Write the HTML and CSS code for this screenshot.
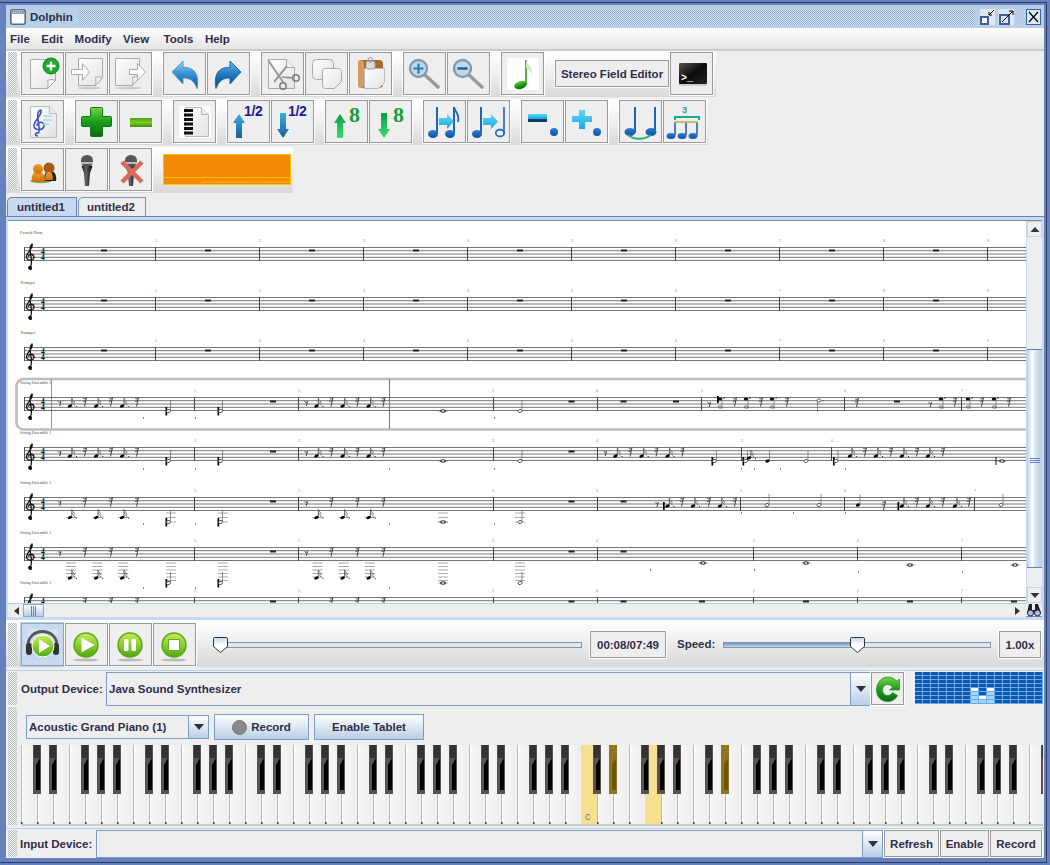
FILE: index.html
```html
<!DOCTYPE html>
<html lang="en">
<head>
<meta charset="utf-8">
<title>Dolphin</title>
<link rel="stylesheet" href="styles.css">
</head>
<body>
<svg class="defs" width="0" height="0" aria-hidden="true">
  <defs>
    <linearGradient id="gPg" x1="0" y1="0" x2="1" y2="1"><stop offset="0" stop-color="#fff"/><stop offset="1" stop-color="#e2e2e2"/></linearGradient>
    <linearGradient id="gB" x1="0" y1="0" x2="0" y2="1"><stop offset="0" stop-color="#9bd6f4"/><stop offset=".45" stop-color="#3a94d4"/><stop offset="1" stop-color="#0d4f96"/></linearGradient>
    <linearGradient id="gBd" x1="0" y1="0" x2="0" y2="1"><stop offset="0" stop-color="#6fbbe8"/><stop offset=".5" stop-color="#1f78bd"/><stop offset="1" stop-color="#0b4683"/></linearGradient>
    <linearGradient id="gG" x1="0" y1="0" x2="0" y2="1"><stop offset="0" stop-color="#7fd04a"/><stop offset=".5" stop-color="#18a018"/><stop offset="1" stop-color="#0c6a14"/></linearGradient>
    <linearGradient id="gGm" x1="0" y1="0" x2="0" y2="1"><stop offset="0" stop-color="#4f9e18"/><stop offset=".5" stop-color="#7ccc22"/><stop offset="1" stop-color="#3d8c10"/></linearGradient>
    <linearGradient id="gP" x1="0" y1="0" x2="0" y2="1"><stop offset="0" stop-color="#c4ef55"/><stop offset="1" stop-color="#4fa80e"/></linearGradient>
    <linearGradient id="gN" x1="0" y1="0" x2="0" y2="1"><stop offset="0" stop-color="#2f7fcf"/><stop offset="1" stop-color="#0f4fa6"/></linearGradient>
    <linearGradient id="gUp" x1="0" y1="0" x2="0" y2="1"><stop offset="0" stop-color="#38b0e0"/><stop offset="1" stop-color="#1a5f96"/></linearGradient>
    <linearGradient id="gGa" x1="0" y1="0" x2="0" y2="1"><stop offset="0" stop-color="#0c9a4a"/><stop offset="1" stop-color="#38e070"/></linearGradient>
    <linearGradient id="gC" x1="0" y1="0" x2="0" y2="1"><stop offset="0" stop-color="#5fd8fa"/><stop offset="1" stop-color="#18a8e0"/></linearGradient>
    <linearGradient id="gT" x1="0" y1="0" x2="1" y2="1"><stop offset="0" stop-color="#555"/><stop offset=".5" stop-color="#0c0c0c"/><stop offset="1" stop-color="#222"/></linearGradient>
    <linearGradient id="gO" x1="0" y1="0" x2="0" y2="1"><stop offset="0" stop-color="#f0a030"/><stop offset="1" stop-color="#c87010"/></linearGradient>
    <linearGradient id="gM" x1="0" y1="0" x2="1" y2="0"><stop offset="0" stop-color="#111"/><stop offset=".4" stop-color="#666"/><stop offset="1" stop-color="#000"/></linearGradient>
    <linearGradient id="gTh" x1="0" y1="0" x2="0" y2="1"><stop offset="0" stop-color="#c4d6ec"/><stop offset=".5" stop-color="#fff"/></linearGradient>
    <g id="ball"><ellipse cx="20" cy="36" rx="13" ry="1.500" fill="#bbb"/><circle cx="20" cy="21" r="12" fill="url(#gP)" stroke="#5aa818" stroke-width="1.500"/></g>
    <g id="mic"><rect x="15" y="6" width="12" height="12" rx="5.500" fill="#555"/><rect x="15" y="13" width="12" height="2" fill="#bbb"/><path d="M15.500 17h11l-2.500 7-1 13h-4l-1-13z" fill="url(#gM)"/></g>
  </defs>
</svg>

<div class="win">
  <header class="title">
    <svg class="win-ic" width="16" height="16" viewBox="0 0 16 16"><rect x=".8" y=".8" width="14.400" height="14.400" rx="2" fill="#fff" stroke="#596a84" stroke-width="1.600"/><rect x="2" y="2" width="12" height="3" fill="#8b9bb3"/><path d="M3 3.500h10" stroke="#dde" stroke-dasharray="1 1"/></svg>
    <span class="title-txt">Dolphin</span>
    <div class="bumps"></div>
    <svg class="win-btn" width="15" height="16" viewBox="0 0 15 16"><rect width="15" height="16" fill="#dde8f5"/><rect x="1" y="8" width="7" height="7" fill="#fff" stroke="#3f5f9a" stroke-width="2"/><path d="M14 1L9 6M9 3v3h3" stroke="#000" fill="none"/></svg>
    <svg class="win-btn m3" width="16" height="16" viewBox="0 0 16 16"><rect width="16" height="16" fill="#dde8f5"/><rect x="2" y="6" width="9" height="9" fill="#d8e4f4" stroke="#3f5f9a" stroke-width="2"/><path d="M4 13L15 2M11 2h4v4" stroke="#000" fill="none"/></svg>
    <svg class="win-btn m12" width="15" height="16" viewBox="0 0 15 16"><rect width="15" height="16" fill="#dde8f5" stroke="#3f5f9a" stroke-width="2"/><path d="M3 3l9 10M12 3L3 13" stroke="#000" stroke-width="1.200"/></svg>
  </header>

  <nav class="menu"><span>File</span><span>Edit</span><span>Modify</span><span>View</span><span class="mw">Tools</span><span>Help</span></nav>

  <div class="tools">
  <div class="tb r1">
    <i class="grip"></i>
    <button class="ib"><svg viewBox="0 0 41 41"><path d="M8.500 6.500h25v21l-8 8h-17z" fill="url(#gPg)" stroke="#aaa"/><path d="M33.500 27.500c-3-1.500-6-1-8 0 1 3 .5 5.500 0 8z" fill="#f2f2f2" stroke="#aaa"/><circle cx="29" cy="13" r="8" fill="#1fa82a" stroke="#0b8c1c"/><path d="M29 8.500v9M24.500 13h9" stroke="#fff" stroke-width="2.400"/></svg></button>
    <button class="ib"><svg viewBox="0 0 41 41"><ellipse cx="23" cy="35" rx="12" ry="1.500" fill="#ccc"/><path d="M12.500 5.500h24v19l-7 8h-17z" fill="url(#gPg)" stroke="#aaa"/><path d="M36.500 24.500c-3-1-5-1-7 0 .5 3 .5 5 0 8z" fill="#f2f2f2" stroke="#aaa"/><path d="M5.500 16.500h11v-6l7 8.500-7 8.500v-6h-11z" fill="#fff" stroke="#aaa"/></svg></button>
    <button class="ib"><svg viewBox="0 0 41 41"><ellipse cx="19" cy="35" rx="13" ry="1.500" fill="#ccc"/><path d="M5.500 5.500h24v19l-7 8h-17z" fill="url(#gPg)" stroke="#aaa"/><path d="M29.500 24.500c-3-1-5-1-7 0 .5 3 .5 5 0 8z" fill="#f2f2f2" stroke="#aaa"/><path d="M19.500 16.500h8v-6l8 8.500-8 8.500v-6h-8z" fill="#fff" stroke="#aaa"/></svg></button>
    <i class="sep"></i>
    <button class="ib"><svg viewBox="0 0 41 41"><path d="M8 19L19 8v6.500c10-1 17 6 14 21-3-8-7-10.500-14-10.500v6z" fill="url(#gB)" stroke="#4a98d4"/></svg></button>
    <button class="ib"><svg viewBox="0 0 41 41"><path d="M33 19L22 8v6.500C12 13.500 5 20.500 8 35.500c3-8 7-10.500 14-10.500v6z" fill="url(#gBd)" stroke="#1a6aaa"/></svg></button>
    <i class="sep"></i>
    <button class="ib"><svg viewBox="0 0 41 41"><path d="M6.500 6.500h18l8 8v21h-26z" fill="url(#gPg)" stroke="#aaa"/><path d="M24.500 6.500v8h8" fill="#eee" stroke="#aaa"/><path d="M6 7l15 22M25 13L12 29" stroke="#999" stroke-width="2" fill="none"/><circle cx="21" cy="33" r="3.200" fill="none" stroke="#777" stroke-width="1.400"/><circle cx="34" cy="25" r="3.200" fill="none" stroke="#777" stroke-width="1.400"/><path d="M20 24l11 1" stroke="#888" stroke-width="1.600"/></svg></button>
    <button class="ib"><svg viewBox="0 0 41 41"><rect x="6.500" y="6.500" width="21" height="20" rx="4" fill="url(#gPg)" stroke="#aaa"/><path d="M19.500 15.500h13c2 0 3 1 3 3v10l-7 7h-9c-2 0-3-1-3-3v-14c0-2 1-3 3-3z" fill="url(#gPg)" stroke="#aaa"/></svg></button>
    <button class="ib"><svg viewBox="0 0 41 41"><rect x="8" y="7" width="25" height="28" rx="4" fill="#a9672c"/><rect x="8" y="7" width="6" height="28" rx="3" fill="#d39a62"/><path d="M14.500 15.500h20v14l-6 6h-14z" fill="url(#gPg)" stroke="#bbb"/><rect x="16" y="8" width="9" height="8" rx="2" fill="#ddd" stroke="#999"/><circle cx="20.500" cy="7" r="2.400" fill="none" stroke="#999"/></svg></button>
    <i class="sep"></i>
    <button class="ib"><svg viewBox="0 0 41 41"><path d="M21 22l14 13" stroke="#999" stroke-width="3.400"/><circle cx="14.500" cy="15.500" r="8.500" fill="#bcd8ec" stroke="#8499ad" stroke-width="2.400"/><path d="M14.500 10.500v10M9.500 15.500h10" stroke="#2b7ab8" stroke-width="2.200"/></svg></button>
    <button class="ib"><svg viewBox="0 0 41 41"><path d="M21 22l14 13" stroke="#999" stroke-width="3.400"/><circle cx="14.500" cy="15.500" r="8.500" fill="#bcd8ec" stroke="#8499ad" stroke-width="2.400"/><path d="M9.500 15.500h10" stroke="#1f5f96" stroke-width="2.400"/></svg></button>
    <i class="sep"></i>
    <button class="ib"><svg viewBox="0 0 41 41"><rect x="5" y="5" width="32" height="32" fill="#fff"/><path d="M24 7v24" stroke="#2c9a1c" stroke-width="1.600"/><path d="M24 7c1 5 7 7 6 15-1-4-3-5-6-7z" fill="#c8e8c0"/><ellipse cx="18.500" cy="32" rx="6.500" ry="4" fill="url(#gG)" transform="rotate(-18 18.500 32)"/></svg></button>
    <i class="sep"></i>
    <button class="tx stereo">Stereo Field Editor</button>
    <button class="ib"><svg viewBox="0 0 41 41"><rect x="8" y="10" width="28" height="21" rx="1" fill="url(#gT)"/><rect x="8" y="31" width="28" height="2" fill="#ccc"/><text x="10" y="28" class="term">&gt;_</text></svg></button>
  </div>

  <div class="tb r2">
    <i class="grip"></i>
    <button class="ib"><svg viewBox="0 0 41 41"><path d="M8.500 5.500h19l7 7v24h-26z" fill="url(#gPg)" stroke="#bbb"/><path d="M27.500 5.500v7h7" fill="#eee" stroke="#bbb"/><path d="M16 35c-4 0-3-4 0-3 2 1 1-9 0-14-1-4 0-9 3-9 1 6-6 9-7 15-1 6 9 6 10 1 0-5-7-5-7 0" fill="none" stroke="#3a50b8" stroke-width="1.500"/><path d="M21 15h9M21 19h9M21 23h6" stroke="#a8d8f4" stroke-width="1.400"/></svg></button>
    <i class="sep"></i>
    <button class="ib"><svg viewBox="0 0 41 41"><path d="M15.500 6.500h10c.5 0 1 .5 1 1v8h8c.5 0 1 .5 1 1v8c0 .5-.5 1-1 1h-8v9c0 .5-.5 1-1 1h-10c-.5 0-1-.5-1-1v-9h-8c-.5 0-1-.5-1-1v-8c0-.5.5-1 1-1h8v-8c0-.5.5-1 1-1z" fill="url(#gG)" stroke="#0b7a16"/></svg></button>
    <button class="ib"><svg viewBox="0 0 41 41"><rect x="10" y="17" width="22" height="9" fill="url(#gGm)"/></svg></button>
    <i class="sep"></i>
    <button class="ib"><svg viewBox="0 0 41 41"><rect x="5" y="5" width="32" height="32" fill="#fff"/><path d="M11.500 6.500h16l7 7v22h-23z" fill="url(#gPg)" stroke="#bbb"/><path d="M27.500 6.500v7h7" fill="#eee" stroke="#bbb"/><path d="M10 9.500h9M10 14h9M10 18.500h9M10 23h9M10 27.500h9M10 32h9" stroke="#111" stroke-width="2.800"/></svg></button>
    <i class="sep"></i>
    <button class="ib"><svg viewBox="0 0 41 41"><path d="M11 13l6 9h-3v15H8V22H5z" fill="url(#gUp)"/><text x="16" y="15" class="half">1/2</text></svg></button>
    <button class="ib"><svg viewBox="0 0 41 41"><path d="M11 37l6-9h-3V12H8v16H5z" fill="url(#gUp)"/><text x="16" y="15" class="half">1/2</text></svg></button>
    <i class="sep"></i>
    <button class="ib"><svg viewBox="0 0 41 41"><path d="M14 13l6 9h-3v15h-6V22H8z" fill="url(#gGa)"/><text x="23" y="21" class="eight">8</text></svg></button>
    <button class="ib"><svg viewBox="0 0 41 41"><path d="M14 37l6-9h-3V12h-6v16H8z" fill="url(#gGa)"/><text x="23" y="21" class="eight">8</text></svg></button>
    <i class="sep"></i>
    <button class="ib"><svg viewBox="0 0 41 41"><path d="M13 6v27M30 6v27" stroke="#1c66b8" stroke-width="2"/><path d="M30 6c1 5 6 7 4 15" fill="none" stroke="#1c66b8" stroke-width="1.800"/><ellipse cx="9" cy="33" rx="5" ry="4" fill="url(#gN)"/><ellipse cx="26" cy="33" rx="5" ry="4" fill="url(#gN)"/><path d="M15 17h8v-4l7 7.500-7 7.500v-4h-8z" fill="url(#gC)"/></svg></button>
    <button class="ib"><svg viewBox="0 0 41 41"><path d="M13 6v27" stroke="#1c66b8" stroke-width="2"/><path d="M36 6v27" stroke="#1c66b8" stroke-width="1.600"/><ellipse cx="9" cy="33" rx="5" ry="4" fill="url(#gN)"/><ellipse cx="32" cy="32" rx="4.200" ry="3.400" fill="none" stroke="#1c66b8" stroke-width="1.600"/><path d="M15 17h8v-4l7 7.500-7 7.500v-4h-8z" fill="url(#gC)"/></svg></button>
    <i class="sep"></i>
    <button class="ib"><svg viewBox="0 0 41 41"><rect x="6" y="13" width="19" height="5" fill="url(#gC)"/><rect x="6" y="18" width="19" height="3" fill="#103c66"/><circle cx="32" cy="31" r="4" fill="url(#gN)"/></svg></button>
    <button class="ib"><svg viewBox="0 0 41 41"><path d="M13 9h6v6h7v6h-7v7h-6v-7H6v-6h7z" fill="url(#gC)"/><circle cx="31" cy="31" r="4" fill="url(#gN)"/></svg></button>
    <i class="sep"></i>
    <button class="ib"><svg viewBox="0 0 41 41"><path d="M15 6v26M35 6v26" stroke="#1c66b8" stroke-width="2"/><ellipse cx="10" cy="31" rx="5.500" ry="4" fill="url(#gN)"/><ellipse cx="31" cy="31" rx="5.500" ry="4" fill="url(#gN)"/><path d="M8 34c6 5 16 5 23 0" fill="none" stroke="#2ab090" stroke-width="2"/></svg></button>
    <button class="ib"><svg viewBox="0 0 41 41"><text x="18" y="12" class="tri">3</text><path d="M11 19v-3h24v3" fill="none" stroke="#20a888" stroke-width="2"/><path d="M11 21v13M22 21v13M33 21v13" stroke="#1c66b8" stroke-width="1.600"/><path d="M11 20h22v2H11z" fill="#c8b868"/><ellipse cx="7" cy="35" rx="4.500" ry="3" fill="url(#gN)"/><ellipse cx="18" cy="35" rx="4.500" ry="3" fill="url(#gN)"/><ellipse cx="29" cy="35" rx="4.500" ry="3" fill="url(#gN)"/></svg></button>
  </div>

  <div class="tb r3">
    <i class="grip"></i>
    <button class="ib"><svg viewBox="0 0 41 41"><ellipse cx="19" cy="32" rx="11" ry="2.200" fill="#6ab04a"/><path d="M22 32c0-6 1-9 4-10h4c3 1 5 5 4 10z" fill="#222"/><circle cx="27" cy="19" r="5.500" fill="#a85a14"/><path d="M10 33c-1-6 1-10 4-10h4c3 0 5 4 5 10z" fill="url(#gO)"/><circle cx="16" cy="20" r="5" fill="url(#gO)"/><path d="M23 31c0-5 1-7 3-8h2c2 1 3 3 3 8z" fill="url(#gO)"/></svg></button>
    <button class="ib"><svg viewBox="0 0 41 41"><use href="#mic"/></svg></button>
    <button class="ib"><svg viewBox="0 0 41 41"><use href="#mic"/><path d="M12 13l20 20M32 13L12 33" stroke="#d86a5c" stroke-width="4.500"/></svg></button>
    <i class="sep"></i>
    <svg class="mem" width="128" height="31" viewBox="0 0 128 31"><rect x=".5" y=".5" width="127" height="30" fill="#f28a05" stroke="#fbc000"/><path d="M0 23.500h128M39 29.500v-1.500h89M59 28v1M84 28v1M108 28v1" stroke="#fbc000" fill="none"/></svg>
  </div>

  <div class="tabs"><span class="tab on">untitled1</span><span class="tab">untitled2</span></div>
  </div>

  <section class="pane">
    <div class="scroll">
      <svg class="score" width="1018" height="382" viewBox="8 221 1018 382">
        <defs>
          <g id="st"><path d="M24 .5h1002M24 3.700h1002M24 7h1002M24 10.300h1002M24 13.500h1002" stroke="#666" stroke-width=".9" fill="none"/><path d="M24.500 0v14" stroke="#555"/><path d="M32 22c-3 1-4.500-2-2-2.700 2 0 1.500-8 .5-13-1-5 0-8 1.500-9.300 2 3-5 8.500-5.500 12.300-.5 5 7.500 5 7.500 1 0-4-5.500-4-5.500-.5" fill="none" stroke="#111" stroke-width="1.300"/><circle cx="30.500" cy="20.500" r="1.500" fill="#000"/><text x="41" y="6.800" class="ts">4</text><text x="41" y="13.300" class="ts">4</text></g>
          <path id="bar" d="M0 0v14" stroke="#444" stroke-width="1"/>
          <rect id="wr" x="-3" y="-1" width="6" height="2" fill="#222"/>
          <g id="r8"><path d="M-1.500-1.500c.5 1 2 1 3 0l-1.300 4.500" fill="none" stroke="#333" stroke-width=".9"/></g>
          <g id="r16"><path d="M-.5 5l2-9M-1.700-3c1 .8 2.200.5 3.200-.8M-2.200-.5c1 .8 2.200.5 3.200-.8" fill="none" stroke="#333" stroke-width=".9"/></g>
          <g id="n16"><ellipse rx="2.400" ry="1.500" fill="#000" transform="rotate(-25)"/><path d="M1.800-.5v-7.500c.5 2 2.500 3 3 5M1.800-5c.5 2 2.500 2.500 3 4.500" fill="none" stroke="#555" stroke-width=".8"/><circle cx="6.500" cy=".5" r=".6" fill="#111"/></g>
          <g id="ch"><ellipse cx="0" cy="0" rx="2.300" ry="1.500" fill="#111"/><path d="M2 0v10" stroke="#666" stroke-width=".7"/><ellipse cx="0" cy="8" rx="1.800" ry="1.200" fill="none" stroke="#555" stroke-width=".7"/><circle cx="4" cy="-.8" r=".6" fill="#111"/></g>
          <g id="hn"><ellipse rx="2" ry="1.500" fill="#fff" stroke="#444" stroke-width=".9" transform="rotate(-20)"/><path d="M2-.5v-10.500" stroke="#666" stroke-width=".7"/></g>
          <g id="hb"><rect x="-3" y="-4" width="1.700" height="8.500" fill="#000"/><use href="#hn"/></g>
          <g id="qn"><ellipse rx="2.300" ry="1.500" fill="#111" transform="rotate(-20)"/><path d="M2-.5v-10" stroke="#666" stroke-width=".7"/></g>
          <g id="wn"><ellipse rx="3" ry="1.700" fill="#333"/><ellipse rx="1.200" ry="1" fill="#fff"/><path d="M-5 0h10" stroke="#777" stroke-width=".6"/></g>
          <g id="run"><use href="#r8" y="6"/><use href="#n16" x="10.500" y="9"/><use href="#r16" x="25.500" y="4.500"/><use href="#n16" x="36.700" y="9"/><use href="#r16" x="51.500" y="4.500"/><use href="#n16" x="62.700" y="9"/><use href="#r16" x="77.500" y="4.500"/></g>
          <g id="l1"><path d="M-4 0h11" stroke="#666" stroke-width=".6"/><use href="#n16"/></g>
          <g id="runL"><use href="#r8" y="6"/><use href="#l1" x="10.500" y="20.500"/><use href="#r16" x="25.500" y="4.500"/><use href="#l1" x="36.700" y="20.500"/><use href="#r16" x="51.500" y="4.500"/><use href="#l1" x="62.700" y="20.500"/><use href="#r16" x="77.500" y="4.500"/></g>
          <g id="l5"><path d="M-4-15h10M-4-11.500h10M-4-8h10M-4-4.500h10M-4-1h10" stroke="#666" stroke-width=".6"/><use href="#n16"/></g>
          <g id="runLL"><use href="#r8" y="6"/><use href="#l5" x="10.500" y="31"/><use href="#r16" x="25.500" y="4.500"/><use href="#l5" x="36.700" y="31"/><use href="#r16" x="51.500" y="4.500"/><use href="#l5" x="62.700" y="31"/><use href="#r16" x="77.500" y="4.500"/></g>
          <g id="runT"><use href="#r16" x="25.500" y="4.500"/><use href="#r16" x="51.500" y="4.500"/><use href="#r16" x="77.500" y="4.500"/></g>
          <g id="led"><path d="M-5 0h10M-5 3.500h10M-5 7h10M-5 10.500h10M-5 14h10M-5 17.500h10" stroke="#777" stroke-width=".6"/></g>
          <g id="led3"><path d="M-5 0h10M-5 4.500h10M-5 9h10" stroke="#777" stroke-width=".6"/></g>
          <g id="wr9"><use href="#wr" x="104"/><use href="#bar" x="155.500" y="-3.500"/><use href="#wr" x="208"/><use href="#bar" x="259.500" y="-3.500"/><use href="#wr" x="312"/><use href="#bar" x="363.500" y="-3.500"/><use href="#wr" x="416"/><use href="#bar" x="467.500" y="-3.500"/><use href="#wr" x="520"/><use href="#bar" x="571.500" y="-3.500"/><use href="#wr" x="624"/><use href="#bar" x="675.500" y="-3.500"/><use href="#wr" x="728"/><use href="#bar" x="779.500" y="-3.500"/><use href="#wr" x="832"/><use href="#bar" x="883.500" y="-3.500"/><use href="#wr" x="936"/><use href="#bar" x="987.500" y="-3.500"/></g>
          <g id="nums9"><text x="155" class="bn">1</text><text x="259" class="bn">2</text><text x="363" class="bn">3</text><text x="467" class="bn">4</text><text x="571" class="bn">5</text><text x="675" class="bn">6</text><text x="779" class="bn">7</text><text x="883" class="bn">8</text><text x="987" class="bn">9</text></g>
          <g id="rStart"><use href="#bar" x="194.500"/><use href="#bar" x="298.500"/><use href="#bar" x="493.500"/><use href="#bar" x="597.500"/></g>
          <g id="nStart"><text x="194" class="bn">1</text><text x="298" class="bn">2</text><text x="492" class="bn">3</text><text x="596" class="bn">4</text></g>
        </defs>

        <text x="20" y="234" class="lbl">French Horn</text>
        <text x="20" y="284" class="lbl">Trumpet</text>
        <text x="20" y="334" class="lbl">Trumpet</text>
        <text x="20" y="384" class="lbl">String Ensemble 1</text>
        <text x="20" y="434" class="lbl">String Ensemble 1</text>
        <text x="20" y="484" class="lbl">String Ensemble 1</text>
        <text x="20" y="534" class="lbl">String Ensemble 1</text>
        <text x="20" y="584" class="lbl">String Ensemble 1</text>

        <g transform="translate(0 247)"><use href="#st"/><use href="#nums9" y="-5"/><g transform="translate(0 3.500)"><use href="#wr9"/></g></g>
        <g transform="translate(0 297)"><use href="#st"/><use href="#nums9" y="-5"/><g transform="translate(0 3.500)"><use href="#wr9"/></g></g>
        <g transform="translate(0 347)"><use href="#st"/><use href="#nums9" y="-5"/><g transform="translate(0 3.500)"><use href="#wr9"/></g></g>

        <rect x="16.500" y="379" width="1040" height="50.500" rx="7" fill="none" stroke="#bdbdbd" stroke-width="2.600"/>
        <path d="M51.500 379v50" stroke="#e87878"/>

        <g transform="translate(0 397)">
          <use href="#st"/><use href="#rStart"/><use href="#nStart" y="-5"/>
          <use href="#bar" x="701.500"/><use href="#bar" x="844.500"/><use href="#bar" x="961.500"/>
          <text x="701" y="-5" class="bn">5</text><text x="844" y="-5" class="bn">6</text><text x="961" y="-5" class="bn">7</text>
          <use href="#run" x="59.500"/><use href="#hb" x="168.500" y="14"/><use href="#hb" x="220.500" y="14"/><use href="#wr" x="273" y="4.500"/>
          <use href="#run" x="306"/><use href="#wn" x="443" y="14"/><use href="#hn" x="520" y="14"/><use href="#wr" x="571.500" y="4.500"/><use href="#wr" x="623.500" y="4.500"/><use href="#wr" x="676" y="4.500"/>
          <use href="#r8" x="709" y="7"/><rect x="717" y="-1" width="1.700" height="7" fill="#000"/><use href="#ch" x="720" y="2"/><use href="#r16" x="735" y="4.500"/><use href="#ch" x="746" y="2"/><use href="#r16" x="761" y="4.500"/><use href="#ch" x="772" y="2"/><use href="#r16" x="787" y="4.500"/>
          <path d="M817.500 4v11" stroke="#666" stroke-width=".7"/><ellipse cx="819" cy="3.500" rx="2" ry="1.500" fill="#fff" stroke="#444" stroke-width=".8"/><circle cx="823" cy="3.500" r=".5" fill="#222"/>
          <use href="#r16" x="857" y="5"/><use href="#wr" x="897" y="4.500"/><use href="#r8" x="930" y="7"/><use href="#ch" x="941" y="2"/><use href="#r16" x="955" y="4.500"/><use href="#ch" x="968" y="2"/><use href="#r16" x="982" y="4.500"/><use href="#ch" x="994" y="2"/><use href="#r16" x="1009" y="4.500"/>
          <path d="M143.500 20v2M195.500 20v2M389.500 20v2M494.500 20v2" stroke="#888"/>
        </g>
        <path d="M389.500 379v50" stroke="#6a6ae0"/>

        <g transform="translate(0 447)">
          <use href="#st"/><use href="#rStart"/><use href="#nStart" y="-5"/>
          <use href="#bar" x="741.500"/><use href="#bar" x="831.500"/>
          <text x="741" y="-5" class="bn">5</text><text x="831" y="-5" class="bn">6</text>
          <use href="#run" x="59.500"/><use href="#hb" x="168.500" y="14"/><use href="#hb" x="220.500" y="14"/><use href="#wr" x="273" y="4.500"/>
          <use href="#run" x="306"/><use href="#wn" x="443" y="14"/><use href="#hn" x="520" y="14"/><use href="#wr" x="571.500" y="4.500"/>
          <use href="#run" x="605"/><use href="#hb" x="714.500" y="14"/><use href="#hb" x="745.500" y="14"/><use href="#n16" x="749" y="11"/><use href="#qn" x="767.500" y="14"/><use href="#hn" x="806" y="14"/>
          <use href="#hb" x="836" y="14"/><use href="#n16" x="850" y="9"/><use href="#r16" x="865" y="4.500"/><use href="#n16" x="876" y="9"/><use href="#r16" x="891" y="4.500"/><use href="#n16" x="902" y="9"/><use href="#r16" x="917" y="4.500"/><use href="#n16" x="928" y="9"/><use href="#r16" x="943" y="4.500"/>
          <rect x="995.500" y="10" width="1" height="8" fill="#111"/><use href="#wn" x="1002" y="14"/>
          <path d="M143.500 21v2M195.500 21v2M389.500 21v2M494.500 21v2M741.500 21v2M754.500 21v2M780.500 21v2M845.500 21v2" stroke="#888"/>
        </g>

        <g transform="translate(0 497)">
          <use href="#st"/><use href="#rStart"/><use href="#nStart" y="-5"/>
          <use href="#bar" x="740.500"/><use href="#bar" x="844.500"/><use href="#bar" x="974.500"/>
          <text x="740" y="-5" class="bn">5</text><text x="844" y="-5" class="bn">6</text><text x="974" y="-5" class="bn">7</text>
          <use href="#runL" x="59.500"/><use href="#led3" x="171" y="16"/><use href="#hb" x="168.500" y="25"/><use href="#led3" x="223" y="16"/><use href="#hb" x="220.500" y="25"/><use href="#wr" x="273" y="4.500"/>
          <use href="#runL" x="306"/><use href="#led3" x="443" y="16"/><use href="#wn" x="443" y="25"/><use href="#led3" x="520" y="16"/><use href="#hn" x="520" y="25"/><use href="#wr" x="571.500" y="4.500"/><use href="#wr" x="623.500" y="4.500"/>
          <use href="#r8" x="656.700" y="7"/><rect x="663" y="5" width="1.700" height="8" fill="#000"/><use href="#n16" x="667.500" y="9"/><use href="#r16" x="682" y="4.500"/><use href="#n16" x="693" y="9"/><use href="#r16" x="709" y="4.500"/><use href="#n16" x="720" y="9"/><use href="#r16" x="735" y="4.500"/>
          <use href="#hn" x="767" y="8"/><use href="#hn" x="819" y="8"/><use href="#qn" x="858" y="8"/><use href="#r16" x="884" y="8"/><rect x="897.500" y="5" width="1.700" height="8" fill="#000"/><use href="#n16" x="902" y="9"/><use href="#r16" x="917" y="4.500"/><use href="#n16" x="928" y="9"/><use href="#r16" x="943" y="4.500"/><use href="#n16" x="955" y="9"/><use href="#r16" x="969" y="4.500"/><use href="#hn" x="1001" y="8"/>
          <path d="M143.500 26v2M195.500 26v2M389.500 26v2M494.500 26v2M741.500 15v2M793.500 15v2M845.500 15v2" stroke="#888"/>
        </g>

        <g transform="translate(0 547)">
          <use href="#st"/><use href="#rStart"/><use href="#nStart" y="-5"/>
          <use href="#bar" x="753.500"/><use href="#bar" x="857.500"/><use href="#bar" x="961.500"/>
          <text x="753" y="-5" class="bn">5</text><text x="857" y="-5" class="bn">6</text><text x="961" y="-5" class="bn">7</text>
          <use href="#runLL" x="59.500"/><use href="#led" x="171" y="16"/><use href="#hb" x="168.500" y="36"/><use href="#led" x="223" y="16"/><use href="#hb" x="220.500" y="36"/><use href="#wr" x="273" y="4.500"/>
          <use href="#runLL" x="306"/><use href="#led" x="443" y="16"/><use href="#wn" x="443" y="36"/><use href="#led" x="520" y="16"/><use href="#hn" x="520" y="36"/><use href="#wr" x="571.500" y="4.500"/><use href="#wr" x="623.500" y="4.500"/>
          <use href="#wn" x="703" y="16"/><use href="#wn" x="806" y="16"/><use href="#wn" x="910" y="18"/><use href="#wn" x="1015" y="18"/>
          <path d="M143.500 40v2M195.500 40v2M389.500 40v2M650.500 22v2M754.500 22v2M858.500 24v2M962.500 24v2" stroke="#888"/>
        </g>

        <g transform="translate(0 597)">
          <use href="#st"/><use href="#rStart"/><use href="#nStart" y="-5"/>
          <use href="#bar" x="753.500"/><use href="#bar" x="857.500"/><use href="#bar" x="961.500"/>
          <text x="753" y="-5" class="bn">5</text><text x="857" y="-5" class="bn">6</text><text x="961" y="-5" class="bn">7</text>
          <use href="#runT" x="59.500"/><use href="#runT" x="306"/>
          <use href="#wr" x="273" y="4.500"/><use href="#wr" x="571.500" y="4.500"/><use href="#wr" x="623.500" y="4.500"/><use href="#wr" x="702" y="4.500"/><use href="#wr" x="806" y="4.500"/><use href="#wr" x="910" y="4.500"/><use href="#wr" x="1014" y="4.500"/>
        </g>
      </svg>

      <div class="vbar">
        <div class="arrow"><svg width="16" height="16" viewBox="0 0 16 16"><path d="M3.500 11L8 6l4.500 5z" fill="#333"/></svg></div>
        <div class="vtrack t1"></div>
        <div class="vthumb"><svg width="10" height="6" viewBox="0 0 10 6"><path d="M0 .5h10M0 2.500h10M0 4.500h10" stroke="#6382bf"/></svg></div>
        <div class="vtrack t2"></div>
        <div class="arrow"><svg width="16" height="16" viewBox="0 0 16 16"><path d="M3.500 6L8 11l4.500-5z" fill="#333"/></svg></div>
      </div>

      <div class="hbar">
        <div class="harrow left"><svg width="15" height="14" viewBox="0 0 15 14"><path d="M11 3L6 7l5 4z" fill="#333"/></svg></div>
        <div class="hthumb"><svg width="6" height="10" viewBox="0 0 6 10"><path d="M.5 0v10M2.500 0v10M4.500 0v10" stroke="#6382bf"/></svg></div>
        <div class="htrack"></div>
        <div class="harrow"><svg width="15" height="14" viewBox="0 0 15 14"><path d="M5 3l5 4-5 4z" fill="#333"/></svg></div>
      </div>
      <div class="corner"><svg width="16" height="14" viewBox="0 0 16 14"><path d="M3 1h3v6h3V1h3l3 9H8.500V9h-1v1H1z" fill="#222"/><circle cx="4.500" cy="10" r="3" fill="#b8b8e8" stroke="#223"/><circle cx="11.500" cy="10" r="3" fill="#b8b8e8" stroke="#223"/></svg></div>
    </div>
  </section>

  <div class="gapwrap">
  <div class="tb player">
    <i class="grip"></i>
    <div class="btns">
      <button class="ib sel"><svg viewBox="0 0 41 41"><path d="M6 24c-2-22 31-22 29 0" fill="none" stroke="#555" stroke-width="2.800"/><rect x="4" y="19" width="6" height="12" rx="3" fill="#333"/><rect x="31" y="19" width="6" height="12" rx="3" fill="#333"/><circle cx="21" cy="22" r="11" fill="url(#gP)" stroke="#fff"/><path d="M17 15l11 7-11 7z" fill="#fff"/></svg></button>
      <button class="ib"><svg viewBox="0 0 41 41"><use href="#ball"/><path d="M15.500 13.500l13 7.500-13 7.500z" fill="#fff"/></svg></button>
      <button class="ib"><svg viewBox="0 0 41 41"><use href="#ball"/><rect x="14" y="15" width="4.500" height="12" rx="1" fill="#fff"/><rect x="21.500" y="15" width="4.500" height="12" rx="1" fill="#fff"/></svg></button>
      <button class="ib"><svg viewBox="0 0 41 41"><use href="#ball"/><rect x="14.500" y="15.500" width="11" height="11" fill="#fff" stroke="#70a828"/></svg></button>
    </div>
    <div class="slider s1"><svg class="thumb" width="15" height="16" viewBox="0 0 15 16"><path d="M.5 1.500a1 1 0 011-1h12a1 1 0 011 1v8l-7 6-7-6z" fill="url(#gTh)" stroke="#333"/></svg></div>
    <span class="tx box time">00:08/07:49</span>
    <span class="lab speed">Speed:</span>
    <div class="slider s2"><div class="fill" style="width:134px"></div><svg class="thumb t2x" width="15" height="16" viewBox="0 0 15 16"><path d="M.5 1.500a1 1 0 011-1h12a1 1 0 011 1v8l-7 6-7-6z" fill="url(#gTh)" stroke="#333"/></svg></div>
    <span class="tx box rate">1.00x</span>
  </div>

  <div class="output">
    <i class="grip"></i>
    <span class="lab ol">Output Device:</span>
    <div class="combo oc"><span class="val">Java Sound Synthesizer</span><span class="drop tall"><svg width="10" height="6" viewBox="0 0 10 6"><path d="M0 0h10L5 6z" fill="#333"/></svg></span></div>
    <button class="ib small"><svg viewBox="0 0 31 31"><path d="M15.500 4c4 0 7 1.500 9 4l3-2v11h-10l3-2.500c-1-2-3-3-5-3-3 0-5 2.500-5 5.500s2 5.500 5 5.500c2 0 4-1 5-3l5 3c-2 4-6 6-10 6-6.500 0-11-5-11-11.500S9 4 15.500 4z" fill="url(#gG)" stroke="#0b7a16" stroke-width=".6"/></svg></button>
    <svg class="meter" width="128" height="32" viewBox="0 0 128 32">
      <defs><pattern id="cells" width="8" height="4" patternUnits="userSpaceOnUse"><rect width="8" height="4" fill="#6cabe8"/><rect width="7" height="3" fill="#0f5ab4"/></pattern></defs>
      <rect width="128" height="32" fill="url(#cells)"/>
      <path d="M56 16h7v3h-7zM72 16h7v3h-7zM64 24h7v3h-7z" fill="#fff"/>
      <path d="M56 20h7v3h-7zM56 24h7v3h-7zM56 28h7v3h-7zM72 20h7v3h-7zM72 24h7v3h-7zM72 28h7v3h-7zM64 28h7v3h-7z" fill="#9ad8fa"/>
    </svg>
  </div>

  <div class="keys">
    <i class="grip"></i>
    <div class="keybody">
      <div class="keytop">
        <div class="combo ic"><span class="val">Acoustic Grand Piano (1)</span><span class="drop"><svg width="10" height="6" viewBox="0 0 10 6"><path d="M0 0h10L5 6z" fill="#333"/></svg></span></div>
        <button class="gbtn rec"><svg width="15" height="15" viewBox="0 0 15 15"><circle cx="7.500" cy="7.500" r="7" fill="#888" stroke="#777"/></svg>Record</button>
        <button class="gbtn tab-b">Enable Tablet</button>
      </div>
      <svg class="piano" width="1022" height="81" viewBox="0 0 1022 81">
        <defs>
          <linearGradient id="gWk" x1="0" y1="0" x2="1" y2="0"><stop offset="0" stop-color="#f8f8f8"/><stop offset="1" stop-color="#efeded"/></linearGradient>
          <pattern id="wk" width="16" height="81" patternUnits="userSpaceOnUse"><rect width="16" height="81" fill="url(#gWk)"/><rect width="1" height="79" fill="#bdbdbd"/><rect x="1" width="1" height="79" fill="#fff"/><rect x="0" y="77" width="1.500" height="2" fill="#333"/><rect y="79" width="16" height="2" fill="#ccc"/></pattern>
          <g id="blk"><rect width="8" height="49" fill="#575353"/><path d="M3 20L7 13V45H3z" fill="#000"/><rect x="1" y="0" width="6" height="13" fill="#333"/></g>
          <pattern id="bk" width="112" height="81" patternUnits="userSpaceOnUse"><use href="#blk" x="12"/><use href="#blk" x="28"/><use href="#blk" x="60"/><use href="#blk" x="76"/><use href="#blk" x="92"/></pattern>
          <g id="gold"><rect width="8" height="49" fill="#8f7522"/><path d="M3 20L7 13V45H3z" fill="#6f5700"/></g>
        </defs>
        <rect width="1022" height="81" fill="url(#wk)"/>
        <rect x="560" width="16" height="79" fill="#f6df8e"/>
        <rect x="624" width="16" height="79" fill="#f6df8e"/>
        <text x="564" y="75" class="cnote">C</text>
        <rect width="1022" height="49" fill="url(#bk)"/>
        <use href="#gold" x="588"/>
        <use href="#gold" x="700"/>
      </svg>
    </div>
  </div>

  <div class="input">
    <i class="grip"></i>
    <span class="lab il">Input Device:</span>
    <div class="combo inc"><span class="val"></span><span class="drop"><svg width="10" height="6" viewBox="0 0 10 6"><path d="M0 0h10L5 6z" fill="#333"/></svg></span></div>
    <button class="tx ibtn b1">Refresh</button>
    <button class="tx ibtn b2">Enable</button>
    <button class="tx ibtn b3">Record</button>
  </div>
  </div>
</div>
</body>
</html>
```
FILE: styles.css
```css
* { box-sizing: border-box; }
html, body { margin: 0; padding: 0; }
body { width: 1050px; height: 865px; overflow: hidden; background: #6382bf; font: bold 11.5px "Liberation Sans", Arial, sans-serif; color: #2f2f48; }
.defs { position: absolute; }
button { font: inherit; color: inherit; margin: 0; padding: 0; cursor: default; }

.win { width: 1047px; height: 861px; margin-top: 2px; padding: 2px 2px 4px 6px; border-top: 1px solid #333b5c; border-bottom: 1px solid #333b5c; border-right: 1px solid #333b5c; display: flex; flex-direction: column; background: #6382bf; }
.win > * { flex: none; }

.title { height: 23px; display: flex; align-items: center; background: #b8cfe5; padding: 0 3px 0 4px; }
.title-txt { margin-left: 4px; width: 48px; }
.bumps { flex: 1; height: 16px; background-color: #d6e3f1; background-image: conic-gradient(#8eaedb 25%, transparent 0 50%, #8eaedb 0 75%, transparent 0); background-size: 2px 2px; margin-right: 5px; }
.win-btn { display: block; }
.m3 { margin-left: 3px; }
.m12 { margin-left: 12px; }

.menu { height: 23px; display: flex; align-items: center; gap: 11.5px; padding-left: 4px; background: linear-gradient(#fff, #e4e4e4); border-bottom: 2px solid #ccc; }
.mw { margin-left: 3px; }

.tools { background: #eee; display: flow-root; }
.tb { display: flex; align-items: flex-start; gap: 1px; height: 46px; width: fit-content; padding: 1px 2px 0 2px; background: linear-gradient(#fff 0, #f0f0f0 50%, #d8d8d8 100%); }
.r1 { margin-bottom: 2px; padding-right: 3px; }
.r2 { margin-bottom: 2px; }
.r3 { margin-bottom: 4px; }
.grip { display: block; flex: none; width: 9px; height: 42px; margin-right: 3px; background-color: #f2f2f2; background-image: conic-gradient(#bcbcbc 25%, transparent 0 50%, #bcbcbc 0 75%, transparent 0); background-size: 2px 2px; }
.sep { display: block; width: 9px; }
.ib { width: 43px; height: 43px; padding: 0; background: #eee; border: 1px solid #999; box-shadow: 0 0 0 1px #fff; display: block; }
.ib svg { display: block; width: 41px; height: 41px; }
.ib.sel { background: linear-gradient(#d8e4f2, #c0d4ea); border-color: #8ea4c0; box-shadow: 0 0 0 1px #b8cfe5, inset 0 0 0 5px #c8daee; }
.tx { display: flex; align-items: center; justify-content: center; background: #eee; border: 1px solid #999; box-shadow: 0 0 0 1px #fff; }
.stereo { width: 114px; height: 27px; margin-top: 8px; }
.mem { display: block; margin-top: 6px; }

.tabs { display: flex; height: 20px; padding-left: 1px; gap: 1px; align-items: flex-start; }
.tab { height: 19px; width: 68px; padding: 0 0 1px 8px; display: flex; align-items: center; border: 1px solid #7d93b8; border-bottom: 0; border-top-left-radius: 5px; background: #eee; }
.tab.on { width: 70px; height: 20px; padding-left: 9px; background: #c8daee; border-color: #6382bf; }

.pane { height: 404px; margin-top: -1px; border-top: 1px solid #6382bf; padding: 3px 2px 2px; background: #c8daee; }
.scroll { display: grid; grid-template-columns: 1018px 16px; grid-template-rows: 382px 14px; border-top: 1px solid #7a8a99; height: 397px; background: #eee; border-bottom: 1px solid #7a8a99; }
.score { display: block; background: #fff; }
.ts { font: bold 7.500px "Liberation Serif", serif; fill: #111; }
.bn { font: 4px "Liberation Sans", sans-serif; fill: #999; }
.lbl { font: bold 4px "Liberation Serif", serif; fill: #888; }

.vbar { display: flex; flex-direction: column; background: #eee; border-left: 1px solid #c8daee; }
.arrow { height: 16px; flex: none; background: #eee; border: 1px solid #c8d4e2; }
.arrow svg { display: block; margin: -1px; }
.vtrack.t1 { height: 113px; flex: none; border-bottom: 1px solid #6382bf; }
.vtrack.t2 { height: 20px; flex: none; border-top: 1px solid #6382bf; }
.vthumb { height: 217px; flex: none; display: flex; align-items: center; justify-content: center; padding-top: 4px; background: linear-gradient(90deg, #b8cfe5, #fff 35%, #d4e2f0 60%, #b8cfe5); }

.hbar { display: flex; align-items: stretch; background: #eee; border-top: 1px solid #b8cfe5; }
.harrow { width: 16px; flex: none; }
.harrow.left { width: 15px; }
.htrack { flex: 1; }
.hthumb { width: 21px; flex: none; display: flex; align-items: center; justify-content: center; background: linear-gradient(#fff, #b8cfe5); border: 1px solid #8ea8cc; }
.corner svg { display: block; }

.gapwrap { background: #eee; }
.player { width: 1038px; height: 48px; padding: 3px 0 0 2px; gap: 0; background: linear-gradient(#fff 0, #f0f0f0 40%, #d8d8d8 100%); border-bottom: 1px solid #e8e8e8; margin-bottom: 2px; }
.player .grip { height: 43px; margin-right: 4px; }
.btns { display: flex; gap: 1px; }
.slider { position: relative; height: 6px; margin-top: 19px; border: 1px solid #8496ac; background: #e2e6ea; }
.s1 { width: 361px; margin-left: 25px; }
.s2 { width: 268px; margin-left: 7px; }
.thumb { position: absolute; display: block; top: -6px; left: -9px; }
.t2x { left: 126px; }
.fill { height: 100%; background: linear-gradient(#6f92c4, #c8daee); }
.box { height: 27px; margin-top: 8px; }
.time { width: 76px; margin-left: 8px; }
.speed { margin: 15px 0 0 11px; width: 39px; }
.rate { width: 42px; margin-left: 8px; }

.output { height: 36px; display: flex; align-items: flex-start; padding: 1px 0 0 2px; border-top: 1px solid #b8cfe5; margin-bottom: 1px; }
.output .grip { height: 33px; margin-right: 3px; }
.ol { margin: 11px 0 0 1px; width: 85px; white-space: nowrap; }
.combo { display: flex; align-items: stretch; border: 1px solid #7e9cc4; background: #eee; }
.val { flex: 1; display: flex; align-items: center; padding-left: 2px; white-space: nowrap; }
.drop { width: 20px; flex: none; display: flex; align-items: center; justify-content: center; background: linear-gradient(#fff, #b8cfe5); border-left: 1px solid #7e9cc4; }
.oc { width: 765px; height: 34px; }
.ib.small { width: 33px; height: 33px; }
.ib.small svg { width: 31px; height: 31px; }
.meter { display: block; margin-left: 11px; }

.keys { height: 119px; display: flex; padding-left: 2px; margin-bottom: 2px; }
.keys .grip { height: 118px; margin-right: 4px; }
.keybody { width: 1022px; }
.keytop { display: flex; gap: 5px; height: 38px; padding: 7px 0 0 5px; }
.ic { width: 183px; height: 24px; margin-top: 1px; }
.gbtn { height: 26px; display: flex; align-items: center; justify-content: center; gap: 4px; background: linear-gradient(#fff, #b8cfe5); border: 1px solid #7e9cc4; }
.rec { width: 95px; }
.tab-b { width: 110px; }
.piano { display: block; }
.cnote { font: 9px "Liberation Mono", monospace; fill: #777; }

.input { height: 30px; display: flex; align-items: flex-start; padding: 1px 0 0 2px; border-top: 1px solid #b8cfe5; }
.input .grip { height: 27px; margin-right: 3px; }
.il { margin: 8px 0 0 0; width: 76px; white-space: nowrap; }
.inc { width: 787px; height: 28px; margin-right: 1px; }
.ibtn { height: 27px; }
.b1 { width: 55px; margin-right: 1px; }
.b2 { width: 49px; margin-right: 1px; }
.b3 { width: 52px; }

.term { font: bold 10px "Liberation Mono", monospace; fill: #fff; }
.half { font: bold 14px "Liberation Sans", sans-serif; fill: #1a1a9c; letter-spacing: -.4px; }
.eight { font: bold 22px "Liberation Serif", serif; fill: #1a9c3a; }
.tri { font: bold 9px "Liberation Sans", sans-serif; fill: #20a888; }
```
